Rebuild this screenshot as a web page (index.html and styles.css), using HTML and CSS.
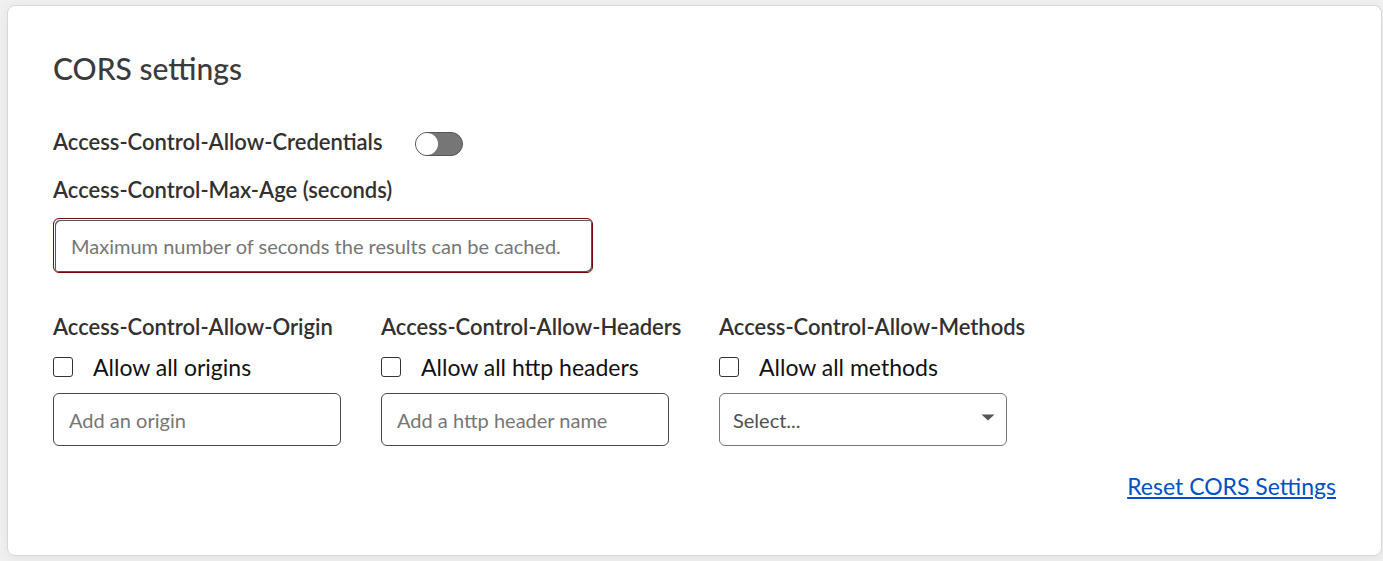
FILE: index.html
```html
<!DOCTYPE html>
<html lang="en">
<head>
<meta charset="utf-8">
<meta name="viewport" content="width=device-width, initial-scale=1">
<title>CORS settings</title>
<link rel="stylesheet" href="styles.css">
</head>
<body>
<main class="card">
  <h1 class="title">CORS settings</h1>
  <form class="form">
    <div class="switch-row">
      <label class="label" for="credentials">Access-Control-Allow-Credentials</label>
      <input class="switch" id="credentials" type="checkbox" role="switch">
    </div>
    <div class="max-age">
      <label class="label" for="max-age">Access-Control-Max-Age (seconds)</label>
      <input class="field field-invalid" id="max-age" type="text" placeholder="Maximum number of seconds the results can be cached.">
    </div>
    <div class="columns">
      <div class="column">
        <label class="label" for="origin">Access-Control-Allow-Origin</label>
        <label class="check"><input class="box" type="checkbox"><span>Allow all origins</span></label>
        <input class="field" id="origin" type="text" placeholder="Add an origin">
      </div>
      <div class="column">
        <label class="label" for="header">Access-Control-Allow-Headers</label>
        <label class="check"><input class="box" type="checkbox"><span>Allow all http headers</span></label>
        <input class="field" id="header" type="text" placeholder="Add a http header name">
      </div>
      <div class="column">
        <label class="label" for="methods">Access-Control-Allow-Methods</label>
        <label class="check"><input class="box" type="checkbox"><span>Allow all methods</span></label>
        <div class="select-wrap">
          <select class="field select" id="methods"><option>Select...</option></select>
          <svg class="arrow" viewBox="0 0 14 7" aria-hidden="true"><path d="M0.5 0.5h13L7 6.5z" fill="#555"/></svg>
        </div>
      </div>
    </div>
    <div class="actions"><a class="reset" href="#">Reset CORS Settings</a></div>
  </form>
</main>
</body>
</html>
```
FILE: styles.css
```css
* { box-sizing: border-box; }
body {
  margin: 0;
  padding: 5px 1px 5px 7px;
  background: #f0f0f0;
  color: #323130;
  font-family: Lato, "Open Sans", sans-serif;
  font-size: 22px;
  line-height: 28px;
}
.card {
  padding: 42px 45px 55px;
  background: #fff;
  border: 1px solid #d8d8d8;
  border-radius: 8px;
  box-shadow: 0 2px 12px rgba(0, 0, 0, 0.06);
}
.title {
  margin: 0 0 40px;
  font-size: 30px;
  font-weight: 500;
  line-height: 40px;
  color: #3b3b3b;
}
.form { margin: 0; }
.label {
  display: block;
  font-weight: 600;
  white-space: nowrap;
}
.switch-row { display: flex; align-items: flex-end; gap: 32px; margin-bottom: 20px; }
.switch {
  appearance: none;
  flex: none;
  display: flex;
  width: 48px;
  height: 24px;
  margin: 0;
  border: 1px solid #555;
  border-radius: 12px;
  background: #767676;
}
.switch::before {
  content: "";
  width: 22px;
  height: 22px;
  border-radius: 50%;
  background: #fff;
}
.switch:checked { justify-content: flex-end; }
.max-age { display: flex; flex-direction: column; gap: 14px; max-width: 540px; margin-bottom: 40px; }
.field {
  width: 100%;
  height: 53px;
  padding: 0 15px;
  border: 1px solid #484848;
  border-radius: 6px;
  background: #fff;
  color: #323130;
  font: inherit;
  font-size: 20px;
}
.field::placeholder { color: #767676; opacity: 1; }
.field-invalid {
  height: 55px;
  padding: 0 17px;
  border-color: #700b08;
  box-shadow: inset 1px 1px 0 #fff, inset 2px 2px 0 #555, inset -1px -1px 0 #555;
}
.columns {
  display: grid;
  grid-template-columns: 288px 298px 306px;
  gap: 40px;
}
.column { display: flex; flex-direction: column; gap: 12px; }
.column .field { max-width: 288px; }
.check { display: flex; align-items: center; gap: 20px; color: #111; font-size: 23px; }
.box {
  appearance: none;
  flex: none;
  width: 20px;
  height: 20px;
  margin: 0;
  border: 1px solid #333;
  border-radius: 3px;
  background: #fff;
}
.box:checked { background: #0051c3; }
.select-wrap { display: grid; max-width: 288px; align-items: center; }
.select-wrap > * { grid-area: 1 / 1; }
.select { appearance: none; border-color: #767676; padding: 0 13px; color: #505050; }
.arrow { justify-self: end; width: 14px; height: 7px; margin: 0 12px 4px 0; pointer-events: none; }
.actions { display: flex; justify-content: flex-end; margin-top: 26px; font-size: 23px; }
.reset { color: #0051c3; text-underline-offset: 2px; }
```
